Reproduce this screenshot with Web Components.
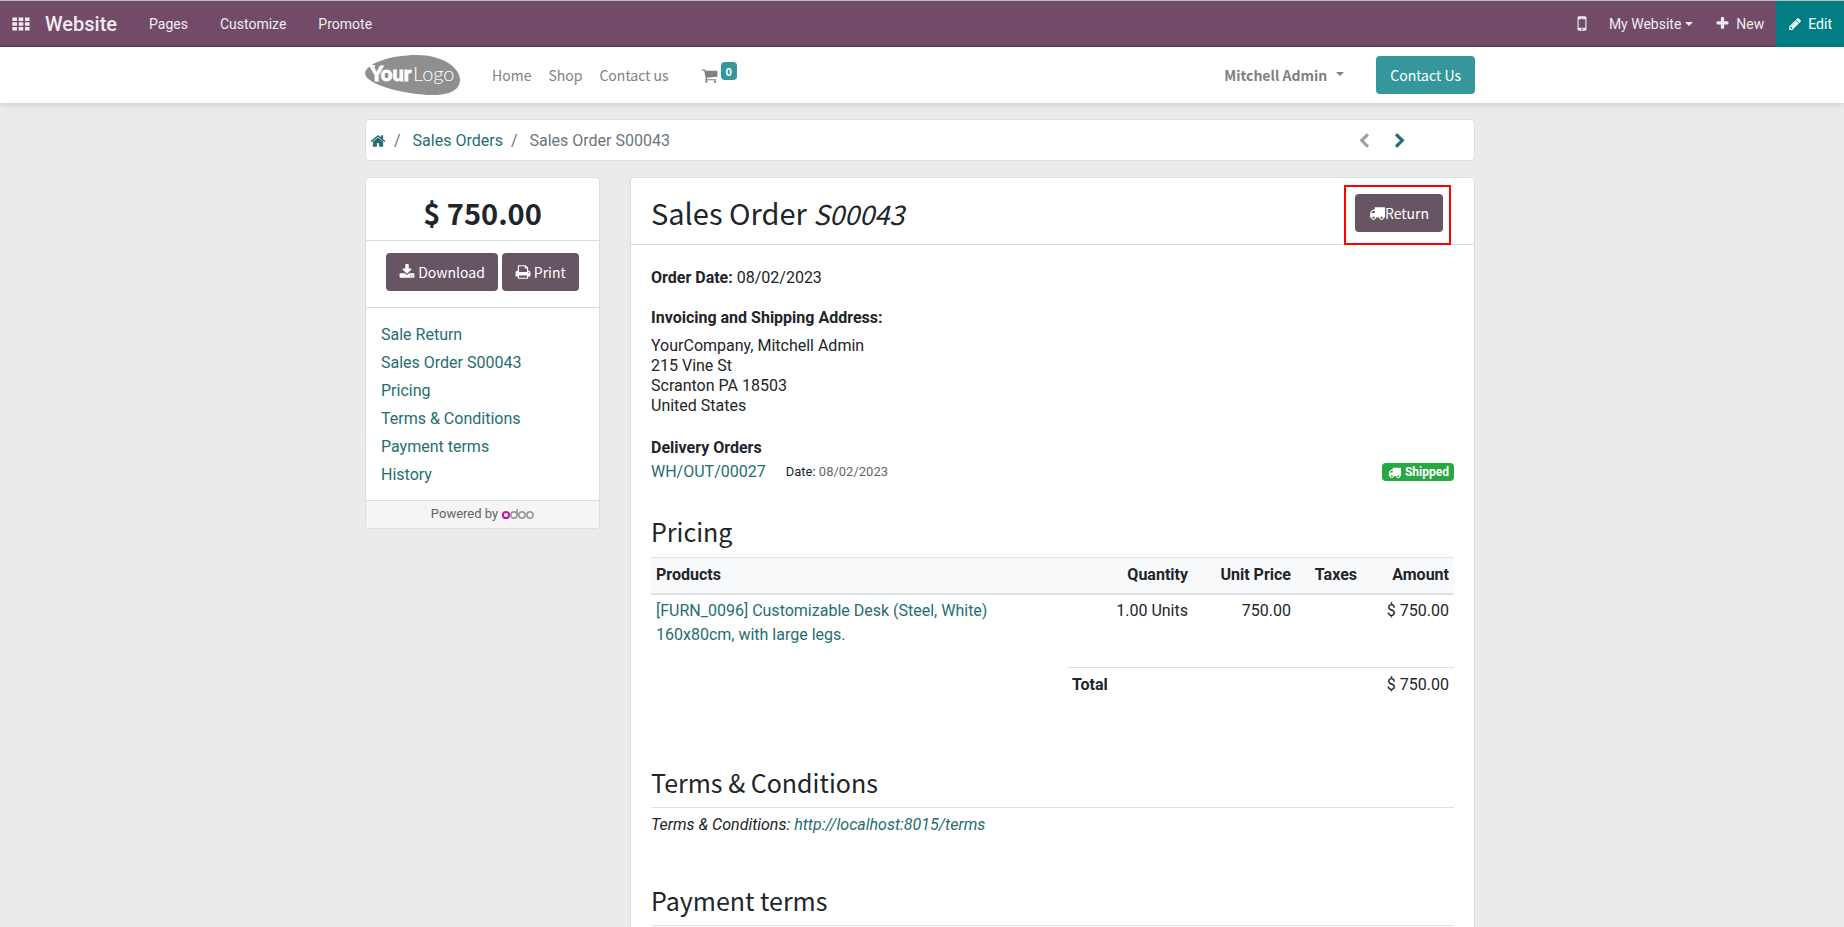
<!DOCTYPE html>
<html lang="en">
<head>
<meta charset="utf-8">
<title>Sales Order S00043 | My Website</title>
<style>
html, body { margin: 0; height: 100%; }
body {
  font-family: Roboto, "Liberation Sans", sans-serif;
  font-size: 16px; line-height: 24px; color: #212529;
  --head: "Noto Sans CJK SC", "Noto Sans", sans-serif;
  --link: #256e70; --teal: #35979c; --plum: #685563; --line: #dcdddf;
}
</style>
</head>
<body>
<portal-page></portal-page>
<script>
const ICONS = {
  truck: 'M640 1408q0-52-38-90t-90-38-90 38-38 90 38 90 90 38 90-38 38-90zm-384-512h384v-256h-158q-13 0-22 9l-195 195q-9 9-9 22v30zm1280 512q0-52-38-90t-90-38-90 38-38 90 38 90 90 38 90-38 38-90zm256-1088v1024q0 15-4 26.5t-13.5 18.5-16.5 11.5-23.5 6-22.5 2-25.5 0-22.5-.5q0 106-75 181t-181 75-181-75-75-181h-384q0 106-75 181t-181 75-181-75-75-181h-64q-3 0-22.5.5t-25.5 0-22.5-2-23.5-6-16.5-11.5-13.5-18.5-4-26.5q0-26 19-45t45-19v-320q0-8-.5-35t0-38 2.5-34.5 6.5-37 14-30.5 22.5-30l198-198q19-19 50.5-32t58.5-13h160v-192q0-26 19-45t45-19h1024q26 0 45 19t19 45z',
  pencil: 'M491 1536l91-91-235-235-91 91v107h128v128h107zm523-928q0-22-22-22-10 0-17 7l-542 542q-7 7-7 17 0 22 22 22 10 0 17-7l542-542q7-7 7-17zm-54-192l416 416-832 832h-416v-416zm683 96q0 53-37 90l-166 166-416-416 166-165q36-38 90-38 53 0 91 38l235 234q37 39 37 91z',
  home: 'M1472 992v480q0 26-19 45t-45 19h-384v-384h-256v384h-384q-26 0-45-19t-19-45v-480q0-1 .5-3t.5-3l575-474 575 474q1 2 1 6zm223-69l-62 74q-8 9-21 11h-3q-13 0-21-7l-692-577-692 577q-12 8-24 7-13-2-21-11l-62-74q-8-10-7-23.5t11-21.5l719-599q32-26 76-26t76 26l244 204v-195q0-14 9-23t23-9h192q14 0 23 9t9 23v408l219 182q10 8 11 21.5t-7 23.5z',
  cart: 'M704 1536q0 52-38 90t-90 38-90-38-38-90 38-90 90-38 90 38 38 90zm896 0q0 52-38 90t-90 38-90-38-38-90 38-90 90-38 90 38 38 90zm128-1088v512q0 24-16.5 42.5t-40.5 21.5l-1044 122q13 60 13 70 0 16-24 64h920q26 0 45 19t19 45-19 45-45 19h-1024q-26 0-45-19t-19-45q0-11 8-31.5t16-36 21.5-40 15.5-29.5l-177-823h-204q-26 0-45-19t-19-45 19-45 45-19h256q16 0 28.5 6.5t19.5 15.5 13 24.5 8 26 5.5 29.5 4.5 26h1201q26 0 45 19t19 45z',
  download: 'M1344 1344q0-26-19-45t-45-19-45 19-19 45 19 45 45 19 45-19 19-45zm256 0q0-26-19-45t-45-19-45 19-19 45 19 45 45 19 45-19 19-45zm128-224v320q0 40-28 68t-68 28h-1472q-40 0-68-28t-28-68v-320q0-40 28-68t68-28h465l135 136q58 56 136 56t136-56l136-136h464q40 0 68 28t28 68zm-325-569q17 41-14 70l-448 448q-18 19-45 19t-45-19l-448-448q-31-29-14-70 17-39 59-39h256v-448q0-26 19-45t45-19h256q26 0 45 19t19 45v448h256q42 0 59 39z',
  print: 'M448 1536h896v-256h-896v256zm0-640h896v-384h-160q-40 0-68-28t-28-68v-160h-640v640zm1152 64q0-26-19-45t-45-19-45 19-19 45 19 45 45 19 45-19 19-45zm128 0v416q0 13-9.5 22.5t-22.5 9.5h-224v160q0 40-28 68t-68 28h-960q-40 0-68-28t-28-68v-160h-224q-13 0-22.5-9.5t-9.5-22.5v-416q0-79 56.5-135.5t135.5-56.5h64v-544q0-40 28-68t68-28h672q40 0 88 20t76 48l152 152q28 28 48 76t20 88v256h64q79 0 135.5 56.5t56.5 135.5z',
  plus: 'M1600 736v192q0 40-28 68t-68 28h-416v416q0 40-28 68t-68 28h-192q-40 0-68-28t-28-68v-416h-416q-40 0-68-28t-28-68v-192q0-40 28-68t68-28h416v-416q0-40 28-68t68-28h192q40 0 68 28t28 68v416h416q40 0 68 28t28 68z',
  left: 'M1427 301l-531 531 531 531q19 19 19 45t-19 45l-166 166q-19 19-45 19t-45-19l-742-742q-19-19-19-45t19-45l742-742q19-19 45-19t45 19l166 166q19 19 19 45t-19 45z',
  right: 'M1363 877l-742 742q-19 19-45 19t-45-19l-166-166q-19-19-19-45t19-45l531-531-531-531q-19-19-19-45t19-45l166-166q19-19 45-19t45 19l742 742q19 19 19 45t-19 45z',
  mobile: 'M976 1408q0-33-23.5-56.5t-56.5-23.5-56.5 23.5-23.5 56.5 23.5 56.5 56.5 23.5 56.5-23.5 23.5-56.500zm256-180v-780q0-13-9.500-22.500t-22.500-9.500h-608q-13 0-22.500 9.500t-9.500 22.500v780q0 13 9.500 22.500t22.500 9.500h608q13 0 22.500-9.500t9.500-22.500zm-240-908q0-16-16-16h-160q-16 0-16 16t16 16h160q16 0 16-16zm352-64v1184q0 52-38 90t-90 38h-640q-52 0-90-38t-38-90v-1184q0-52 38-90t90-38h640q52 0 90 38t38 90z',
  grid: 'M32 256h460v340h-460zM662 256h460v340h-460zM1292 256h460v340h-460zM32 726h460v340h-460zM662 726h460v340h-460zM1292 726h460v340h-460zM32 1196h460v340h-460zM662 1196h460v340h-460zM1292 1196h460v340h-460z'
};

const RESET = `
  *, *::before, *::after { box-sizing: border-box; }
  a { color: inherit; text-decoration: none; }
  button { font: inherit; color: inherit; border: 0; background: none; padding: 0; margin: 0; cursor: pointer; }
  h1, h2, p, ul, ol, address { margin: 0; padding: 0; list-style: none; }`;

function define(name, css, html) {
  const tpl = document.createElement('template');
  tpl.innerHTML = `<style>${RESET}${css}</style>${html}`;
  customElements.define(name, class extends HTMLElement {
    constructor() {
      super();
      this.attachShadow({ mode: 'open' }).append(tpl.content.cloneNode(true));
    }
  });
}

customElements.define('fa-icon', class extends HTMLElement {
  connectedCallback() {
    if (this.shadowRoot) return;
    this.attachShadow({ mode: 'open' }).innerHTML = `
      <style>:host { display: inline-flex; flex: none; width: var(--size, 16px); height: var(--size, 16px); }
      svg { width: 100%; height: 100%; fill: currentColor; fill-rule: evenodd; display: block; }</style>
      <svg viewBox="0 0 1792 1792" aria-hidden="true"><path d="${ICONS[this.getAttribute('name')]}"/></svg>`;
  }
});

define('caret-down', `
  :host { display: inline-block; border: 4px solid transparent; border-top-color: currentColor; border-bottom: 0; }`, '');

define('action-button', `
  :host { display: block; }
  button { display: flex; align-items: center; justify-content: center; width: 100%; height: 38px; padding: 0 var(--pad, 14px);
    border-radius: 4px; background: var(--fill, var(--plum)); color: #fff; white-space: nowrap;
    font-family: var(--head); font-size: 14px; line-height: 24px; gap: var(--gap, 0); }`,
  `<button type="button"><slot></slot></button>`);

define('editor-bar', `
  :host { display: block; border-top: 1px solid #b9bcc0; }
  nav { display: flex; height: 46px; background: #714b67; border-bottom: 1px solid #52364b; color: #f0ebef; font-size: 14px; }
  nav > * { display: flex; align-items: center; }
  .apps { padding-left: 12px; --size: 18px; }
  .brand { padding: 0 16px 0 15px; font-size: 20px; font-weight: 500; }
  .menu { padding: 0 16px; }
  .mobile { margin-left: auto; padding: 0 18px; --size: 18px; }
  .site { gap: 4px; padding-right: 22px; }
  .new { gap: 6px; padding-right: 12px; --size: 15px; }
  .edit { gap: 6px; padding: 0 12px; margin-bottom: -1px; background: #017e84; color: #fff; --size: 14px; }`, `
  <nav aria-label="Editor">
    <button class="apps" aria-label="Apps"><fa-icon name="grid"></fa-icon></button>
    <a class="brand" href="#">Website</a>
    <a class="menu" href="#">Pages</a>
    <a class="menu" href="#">Customize</a>
    <a class="menu" href="#">Promote</a>
    <button class="mobile" aria-label="Mobile preview"><fa-icon name="mobile"></fa-icon></button>
    <button class="site">My Website<caret-down></caret-down></button>
    <button class="new"><fa-icon name="plus"></fa-icon>New</button>
    <button class="edit"><fa-icon name="pencil"></fa-icon>Edit</button>
  </nav>`);

define('site-logo', `
  :host { display: block; width: 95px; height: 40px; }
  svg { display: block; width: 100%; height: 100%; }`, `
  <svg viewBox="0 0 95 40" role="img" aria-label="Your Logo">
    <path d="M0 18C1 9 24 0 52 0C78 0 95 13 95 25C95 35 84 40 68 40C42 40 0 30 0 18Z" fill="#8f8f8f"/>
    <path d="M4 10h6v2h-5z" fill="#fff"/>
    <text x="5" y="26" fill="#fff" stroke="#fff" stroke-width=".8" font-family="Lato" font-weight="900" font-size="20">Your</text>
    <text x="48" y="26" fill="#fff" font-family="Lato" font-weight="300" font-size="20">Logo</text>
  </svg>`);

define('site-header', `
  :host { display: block; position: relative; flex: none; background: #fff; box-shadow: 0 2px 6px rgba(0,0,0,.12); padding-right: 4px; }
  .inner { display: flex; align-items: center; max-width: 1110px; height: 56px; margin: 0 auto; font-family: var(--head); font-size: 14px; color: #808080; white-space: nowrap; }
  .links { display: flex; gap: 17px; padding-left: 32px; }
  .cart { display: flex; align-items: center; gap: 3px; padding-left: 32px; --size: 17px; }
  .badge { align-self: flex-start; height: 18px; min-width: 16px; margin-top: -5px; border-radius: 4px; background: var(--teal); color: #fff; font-size: 11px; font-weight: 700; line-height: 18px; text-align: center; }
  .user { display: flex; align-items: center; gap: 9px; margin-left: auto; padding-right: 32px; font-weight: 700; }
  .user caret-down { margin-top: -3px; }
  action-button { --fill: var(--teal); }`, `
  <div class="inner">
    <a href="#"><site-logo></site-logo></a>
    <nav class="links"><a href="#">Home</a><a href="#">Shop</a><a href="#">Contact us</a></nav>
    <a class="cart" href="#" aria-label="Cart"><fa-icon name="cart"></fa-icon><span class="badge">0</span></a>
    <button class="user">Mitchell Admin<caret-down></caret-down></button>
    <action-button>Contact Us</action-button>
  </div>`);

define('order-breadcrumb', `
  :host { display: flex; align-items: center; height: 42px; padding: 1px 66px 0 4px; background: #fff; border: 1px solid var(--line); border-radius: 4px; box-sizing: border-box; }
  ol { display: flex; align-items: center; color: #6c757d; white-space: nowrap; }
  li { display: flex; align-items: center; }
  li + li::before { content: "/"; padding: 0 12px 0 8px; }
  a { color: var(--link); display: flex; }
  .pager { display: flex; gap: 20px; margin-left: auto; }
  .pager .off { color: #9aa1a8; }`, `
  <ol>
    <li><a href="#" aria-label="Home"><fa-icon name="home"></fa-icon></a></li>
    <li><a href="#">Sales Orders</a></li>
    <li>Sales Order S00043</li>
  </ol>
  <div class="pager">
    <a class="off" href="#" aria-label="Previous"><fa-icon name="left"></fa-icon></a>
    <a href="#" aria-label="Next"><fa-icon name="right"></fa-icon></a>
  </div>`);

define('order-sidebar', `
  :host { display: block; background: #fff; border: 1px solid var(--line); border-radius: 4px; overflow: hidden; }
  .price { height: 63px; padding-top: 15px; border-bottom: 1px solid var(--line); text-align: center; font: 700 29px/38px var(--head); }
  .actions { display: flex; justify-content: center; gap: 4px; height: 67px; padding-top: 12px; border-bottom: 1px solid var(--line); --pad: 13px; --gap: 3px; }
  ul { padding: 13px 15px 11px; }
  li { line-height: 28px; }
  a { color: var(--link); }
  footer { display: flex; align-items: center; justify-content: center; gap: 4px; height: 28px; padding-bottom: 2px; border-top: 1px solid var(--line); background: #f5f5f5; color: #5f6468; font-size: 13px; line-height: 20px; }
  svg { display: block; width: 32px; height: 12px; }`, `
  <h2 class="price">$ 750.00</h2>
  <div class="actions">
    <action-button><fa-icon name="download"></fa-icon>Download</action-button>
    <action-button><fa-icon name="print"></fa-icon>Print</action-button>
  </div>
  <ul>
    <li><a href="#">Sale Return</a></li>
    <li><a href="#">Sales Order S00043</a></li>
    <li><a href="#">Pricing</a></li>
    <li><a href="#">Terms &amp; Conditions</a></li>
    <li><a href="#">Payment terms</a></li>
    <li><a href="#">History</a></li>
  </ul>
  <footer>Powered by
    <svg viewBox="0 0 32 12" role="img" aria-label="odoo" fill="none" stroke="#9c9c9c" stroke-width="1.7">
      <circle cx="4" cy="7" r="3.1" stroke="#c2189b" stroke-width="2"/>
      <circle cx="12" cy="7" r="3.1"/><path d="M15.1 7V1"/>
      <circle cx="20" cy="7" r="3.1"/><circle cx="28" cy="7" r="3.1"/>
    </svg>
  </footer>`);

define('pricing-table', `
  :host { display: block; }
  table { width: 100%; border-collapse: collapse; table-layout: fixed; }
  th, td { padding: 0 5px; text-align: right; vertical-align: top; white-space: nowrap; font-weight: 400; }
  thead th { height: 36px; line-height: 34px; font-weight: 700; background: #f8f9fa; border-top: 1px solid #dee2e6; border-bottom: 2px solid #dee2e6; }
  th:first-child, td:first-child { text-align: left; }
  tbody td { padding-top: 4px; height: 73px; }
  .q { width: 122px; } .u { width: 103px; } .t { width: 66px; } .a { width: 92px; }
  a { color: var(--link); }
  .total { display: flex; justify-content: space-between; width: 387px; margin: 0 0 0 auto; padding: 5px; border-top: 1px solid #dee2e6; }`, `
  <table>
    <thead><tr><th>Products</th><th class="q">Quantity</th><th class="u">Unit Price</th><th class="t">Taxes</th><th class="a">Amount</th></tr></thead>
    <tbody><tr><td><a href="#">[FURN_0096] Customizable Desk (Steel, White)<br>160x80cm, with large legs.</a></td><td>1.00 Units</td><td>750.00</td><td></td><td>$ 750.00</td></tr></tbody>
  </table>
  <div class="total"><strong>Total</strong><span>$ 750.00</span></div>`);

define('order-card', `
  :host { display: block; background: #fff; border: 1px solid var(--line); border-radius: 4px; }
  header { display: flex; justify-content: space-between; height: 67px; padding: 16px 31px 0 20px; border-bottom: 1px solid var(--line); }
  h1 { font: 400 29px/36px var(--head); }
  em { font-size: 27px; }
  .mark { position: relative; align-self: flex-start; }
  .mark::after { content: ""; position: absolute; inset: -9px -8px -13px -11px; border: 2px solid #f00; }
  .body { padding: 21px 20px 60px; }
  .date { padding-bottom: 16px; }
  address { font-style: normal; line-height: 20px; padding: 6px 0 20px; }
  .delivery { display: flex; align-items: center; gap: 20px; }
  .delivery small { font-size: 13px; }
  .delivery small span { color: #666; }
  .badge { display: flex; align-items: center; gap: 4px; margin-left: auto; height: 18px; padding: 0 5px 0 6px; border-radius: 4px; background: #28a745; color: #fff; font-size: 12px; font-weight: 700; --size: 13px; }
  h2 { font: 400 25px/34px var(--head); }
  .pricing { padding: 30px 0 9px; }
  .rule { padding-bottom: 8px; border-bottom: 1px solid #dee2e6; }
  .terms { margin-top: 63px; }
  .payment { margin-top: 46px; }
  .note { padding-top: 5px; font-style: italic; }
  a { color: var(--link); }`, `
  <header>
    <h1>Sales Order <em>S00043</em></h1>
    <div class="mark"><action-button><fa-icon name="truck"></fa-icon>Return</action-button></div>
  </header>
  <div class="body">
    <p class="date"><strong>Order Date:</strong> 08/02/2023</p>
    <strong>Invoicing and Shipping Address:</strong>
    <address>YourCompany, Mitchell Admin<br>215 Vine St<br>Scranton PA 18503<br>United States</address>
    <strong>Delivery Orders</strong>
    <div class="delivery">
      <a href="#">WH/OUT/00027</a>
      <small>Date: <span>08/02/2023</span></small>
      <span class="badge"><fa-icon name="truck"></fa-icon>Shipped</span>
    </div>
    <h2 class="pricing">Pricing</h2>
    <pricing-table></pricing-table>
    <h2 class="rule terms">Terms &amp; Conditions</h2>
    <p class="note">Terms &amp; Conditions: <a href="#">http://localhost:8015/terms</a></p>
    <h2 class="rule payment">Payment terms</h2>
  </div>`);

define('portal-page', `
  :host { display: flex; flex-direction: column; height: 100vh; background: #ebebeb; }
  editor-bar { flex: none; }
  main { flex: 1; min-height: 0; overflow: auto; scrollbar-width: none; padding: 16px 4px 32px 0; }
  .inner { max-width: 1110px; margin: 0 auto; }
  .cols { display: grid; grid-template-columns: 235px minmax(0, 1fr); gap: 30px; align-items: start; margin-top: 16px; }`, `
  <editor-bar></editor-bar>
  <site-header></site-header>
  <main><div class="inner">
    <order-breadcrumb></order-breadcrumb>
    <div class="cols"><order-sidebar></order-sidebar><order-card></order-card></div>
  </div></main>`);
</script>
</body>
</html>
